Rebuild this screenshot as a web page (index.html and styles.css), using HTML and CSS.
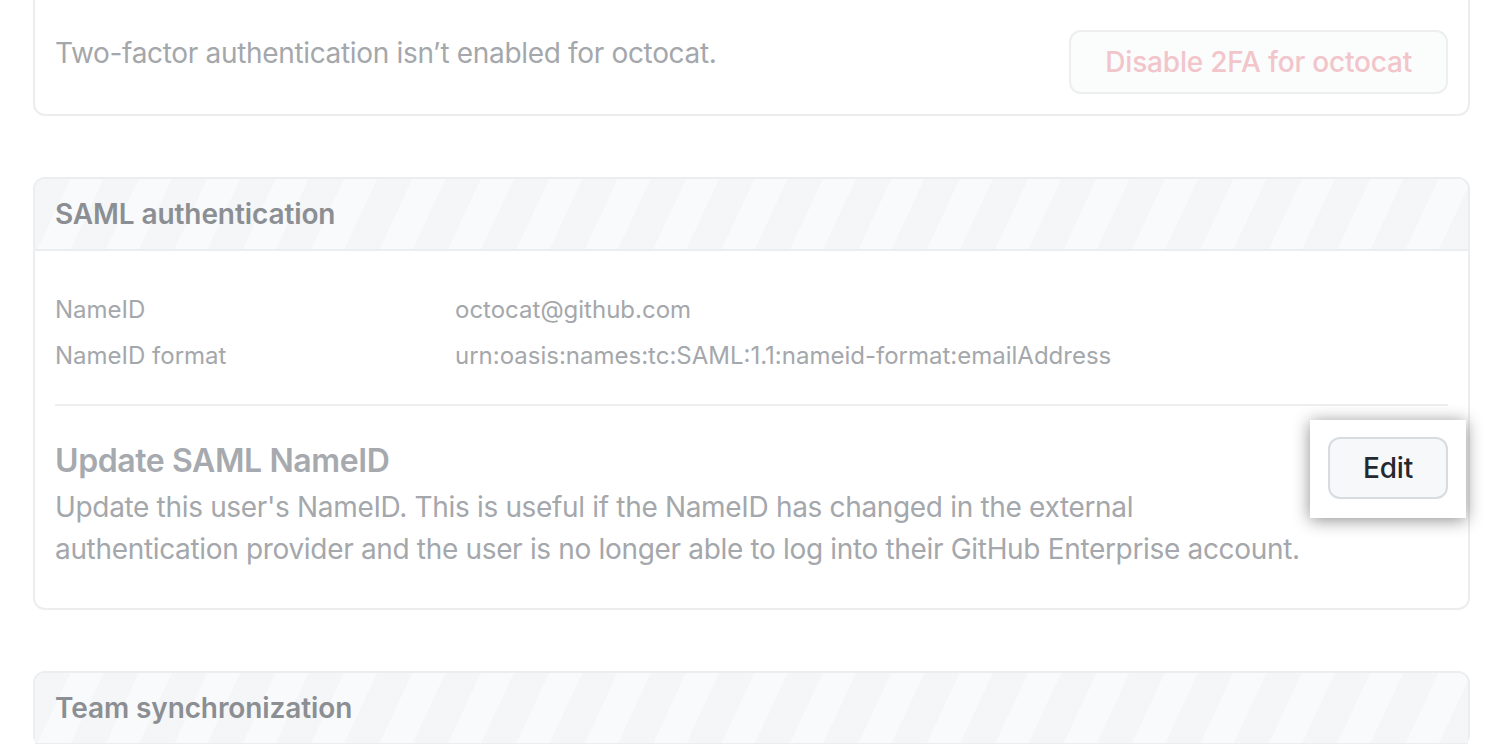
FILE: index.html
```html
<!DOCTYPE html>
<html>
<head>
<meta charset="utf-8">
<link rel="stylesheet" href="styles.css">
</head>
<body>
<div class="page">
  <section class="box box-top">
    <div class="box-body row">
      <p class="muted-text">Two-factor authentication isn’t enabled for octocat.</p>
      <button class="btn btn-danger-faded">Disable 2FA for octocat</button>
    </div>
  </section>

  <section class="box">
    <header class="box-header">SAML authentication</header>
    <div class="box-body saml-body">
      <dl class="props">
        <dt>NameID</dt>
        <dd>octocat@github.com</dd>
        <dt>NameID format</dt>
        <dd>urn:oasis:names:tc:SAML:1.1:nameid-format:emailAddress</dd>
      </dl>
      <div class="update row">
        <div class="update-text">
          <h3 class="update-title">Update SAML NameID</h3>
          <p class="update-desc">Update this user's NameID. This is useful if the NameID has changed in the external<br>authentication provider and the user is no longer able to log into their GitHub Enterprise account.</p>
        </div>
        <div class="callout">
          <button class="btn btn-edit">Edit</button>
        </div>
      </div>
    </div>
  </section>

  <section class="box">
    <header class="box-header">Team synchronization</header>
  </section>
</div>
</body>
</html>
```

FILE: styles.css
```css
* { box-sizing: border-box; }

html, body {
  margin: 0;
  padding: 0;
  background: #ffffff;
  overflow: hidden;
}

body {
  font-family: Inter, "Noto Sans", "Liberation Sans", sans-serif;
  font-size: 28px;
  letter-spacing: -0.33px;
  color: #a4a7ab;
  height: 744px;
}

.page {
  width: 1437px;
  margin-left: 33px;
  display: flex;
  flex-direction: column;
  gap: 61px;
}

.box {
  border: 2px solid #ebedef;
  border-radius: 12px;
  background: #ffffff;
}

.box-top {
  margin-top: -4px;
  border-top-left-radius: 0;
  border-top-right-radius: 0;
}

.row {
  display: flex;
  justify-content: space-between;
  align-items: flex-start;
}

.box-body {
  padding: 32px 20px 20px 20px;
}

.muted-text {
  margin: 0;
  padding-top: 2px;
  line-height: 42px;
  color: #a4a7ab;
}

.btn {
  font-family: inherit;
  font-size: 28px;
  font-weight: 500;
  letter-spacing: -0.2px;
  border-radius: 12px;
  cursor: pointer;
}

.btn-danger-faded {
  height: 64px;
  padding: 0 34px;
  background: #fbfcfc;
  border: 2px solid #eceeef;
  color: #f1c5ca;
}

.box-header {
  padding: 15px 20px;
  line-height: 40px;
  font-weight: 600;
  letter-spacing: -0.1px;
  color: #8b8e93;
  border-bottom: 2px solid #ebedef;
  border-radius: 10px 10px 0 0;
  background-color: #f9fafb;
  background-image: repeating-linear-gradient(
    115deg,
    rgba(241, 242, 244, 0.55) 0px,
    rgba(241, 242, 244, 0.55) 32px,
    rgba(255, 255, 255, 0) 32px,
    rgba(255, 255, 255, 0) 62px
  );
}

.saml-body {
  padding: 36px 20px 38px 20px;
}

.props {
  display: grid;
  grid-template-columns: 400px 1fr;
  margin: 0;
  line-height: 46px;
  font-size: 24px;
  letter-spacing: 0;
  padding-bottom: 25px;
  border-bottom: 2px solid #eeeff1;
}

.props dt, .props dd {
  margin: 0;
  color: #a4a7ab;
}

.update {
  padding-top: 30px;
}

.update-text {
  flex: 1 1 auto;
  min-width: 0;
}

.update-title {
  margin: 0;
  font-size: 32px;
  font-weight: 600;
  letter-spacing: -0.4px;
  line-height: 50px;
  color: #a6a9ae;
}

.update-desc {
  margin: 0;
  line-height: 42px;
  white-space: nowrap;
  color: #a4a7ab;
}

.callout {
  flex: 0 0 auto;
  background: #ffffff;
  padding: 17px 18px 19px 18px;
  margin: -16px -18px 0 0;
  box-shadow: 0 2px 16px rgba(0, 0, 0, 0.45);
  position: relative;
}

.btn-edit {
  display: block;
  width: 120px;
  height: 62px;
  background: #f6f8fa;
  border: 2px solid #d8dce0;
  color: #24292f;
}
```
